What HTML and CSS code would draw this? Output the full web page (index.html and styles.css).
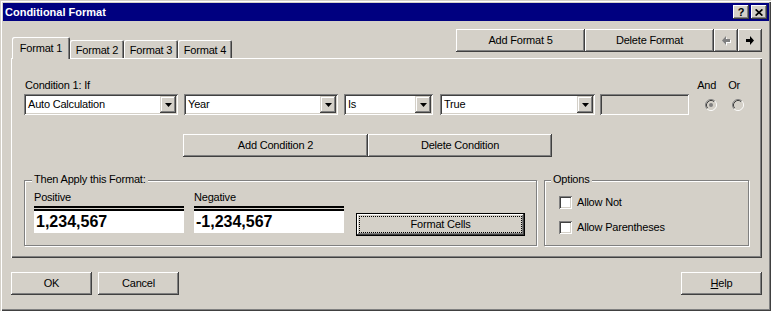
FILE: index.html
```html
<!DOCTYPE html>
<html>
<head>
<meta charset="utf-8">
<title>Conditional Format</title>
<link rel="stylesheet" href="styles.css">
</head>
<body>
<div class="window">
  <div class="titlebar">
    <span class="title">Conditional Format</span>
    <div class="tbtns">
      <span class="tbtn q">?</span>
      <span class="tbtn"><svg width="8" height="7" viewBox="0 0 8 7"><path d="M0.6 0.4 L7.4 6.6 M7.4 0.4 L0.6 6.6" stroke="#000" stroke-width="1.7" fill="none"/></svg></span>
    </div>
  </div>
  <div class="body">
    <div class="tabrow">
      <div class="tabs">
        <div class="tab sel">Format 1</div>
        <div class="tab">Format 2</div>
        <div class="tab">Format 3</div>
        <div class="tab">Format 4</div>
      </div>
      <div class="topbtns">
        <div class="btn wide">Add Format 5</div>
        <div class="btn wide">Delete Format</div>
        <div class="btn arrow"><svg width="9" height="10" viewBox="0 0 9 10"><polygon points="9,4 5,4 5,1 1,5.5 5,10 5,7 9,7" fill="#fff"/><polygon points="8,3 4,3 4,0 0,4.5 4,9 4,6 8,6" fill="#808080"/></svg></div>
        <div class="btn arrow"><svg width="9" height="10" viewBox="0 0 9 10"><polygon points="0,3 4,3 4,0 8,4.5 4,9 4,6 0,6" fill="#000"/></svg></div>
      </div>
    </div>
    <div class="panel">
      <div class="labelrow">
        <span class="cond">Condition 1: If</span>
        <span class="and">And</span>
        <span class="or">Or</span>
      </div>
      <div class="ctrlrow">
        <div class="combo c1"><span class="ctext">Auto Calculation</span><span class="cbtn"><svg width="7" height="4" viewBox="0 0 7 4"><polygon points="0,0 7,0 3.5,4" fill="#000"/></svg></span></div>
        <div class="combo c2"><span class="ctext">Year</span><span class="cbtn"><svg width="7" height="4" viewBox="0 0 7 4"><polygon points="0,0 7,0 3.5,4" fill="#000"/></svg></span></div>
        <div class="combo c3"><span class="ctext">Is</span><span class="cbtn"><svg width="7" height="4" viewBox="0 0 7 4"><polygon points="0,0 7,0 3.5,4" fill="#000"/></svg></span></div>
        <div class="combo c4"><span class="ctext">True</span><span class="cbtn"><svg width="7" height="4" viewBox="0 0 7 4"><polygon points="0,0 7,0 3.5,4" fill="#000"/></svg></span></div>
        <div class="combo c5 disabled"></div>
        <svg class="radio r1" width="12" height="12" viewBox="0 0 12 12">
          <circle cx="6" cy="6" r="5" fill="#D4D0C8"/>
          <path d="M2.11 9.89 A5.5 5.5 0 0 1 9.89 2.11" stroke="#808080" fill="none"/>
          <path d="M2.82 9.18 A4.5 4.5 0 0 1 9.18 2.82" stroke="#404040" fill="none"/>
          <path d="M9.89 2.11 A5.5 5.5 0 0 1 2.11 9.89" stroke="#fff" fill="none"/>
          <path d="M9.18 2.82 A4.5 4.5 0 0 1 2.82 9.18" stroke="#D4D0C8" fill="none"/>
          <circle cx="6" cy="6" r="2" fill="#808080"/>
        </svg>
        <svg class="radio r2" width="12" height="12" viewBox="0 0 12 12">
          <circle cx="6" cy="6" r="5" fill="#D4D0C8"/>
          <path d="M2.11 9.89 A5.5 5.5 0 0 1 9.89 2.11" stroke="#808080" fill="none"/>
          <path d="M2.82 9.18 A4.5 4.5 0 0 1 9.18 2.82" stroke="#404040" fill="none"/>
          <path d="M9.89 2.11 A5.5 5.5 0 0 1 2.11 9.89" stroke="#fff" fill="none"/>
          <path d="M9.18 2.82 A4.5 4.5 0 0 1 2.82 9.18" stroke="#D4D0C8" fill="none"/>
        </svg>
      </div>
      <div class="condbtns">
        <div class="btn cb1">Add Condition 2</div>
        <div class="btn cb2">Delete Condition</div>
      </div>
      <div class="groups">
        <div class="group g1">
          <span class="legend l1">Then Apply this Format:</span>
          <div class="fmtrow">
            <div class="col">
              <div class="lbl">Positive</div>
              <div class="preview">1,234,567</div>
            </div>
            <div class="col col2">
              <div class="lbl">Negative</div>
              <div class="preview">-1,234,567</div>
            </div>
            <div class="btn default"><span class="focus">Format Cells</span></div>
          </div>
        </div>
        <div class="group g2">
          <span class="legend l2">Options</span>
          <div class="chk first"><span class="box"></span>Allow Not</div>
          <div class="chk second"><span class="box"></span>Allow Parentheses</div>
        </div>
      </div>
    </div>
    <div class="footer">
      <div class="btn fb">OK</div>
      <div class="btn fb cancel">Cancel</div>
      <div class="btn fb help"><u>H</u>elp</div>
    </div>
  </div>
</div>
</body>
</html>
```
FILE: styles.css
```css
* { box-sizing: border-box; }
html, body { margin: 0; padding: 0; background: #D4D0C8; }
body {
  font-family: "Liberation Sans", Arial, sans-serif;
  font-size: 11px;
  line-height: 13px;
  letter-spacing: -0.2px;
  color: #000;
}
.window {
  width: 771px;
  height: 311px;
  background: #D4D0C8;
  padding: 3px 2px 0 3px;
  box-shadow: inset 1px 1px #D4D0C8, inset 2px 2px #fff, inset -1px -1px #404040, inset -2px -2px #808080;
}
.titlebar {
  height: 18px;
  background: #000080;
  color: #fff;
  display: flex;
  align-items: center;
  padding-left: 2px;
}
.title { font-weight: bold; font-size: 11px; letter-spacing: 0; }
.tbtns { margin-left: auto; margin-right: 2px; display: flex; gap: 2px; }
.tbtn {
  width: 16px;
  height: 14px;
  background: #D4D0C8;
  color: #000;
  display: flex;
  align-items: center;
  justify-content: center;
  font-weight: bold;
  font-size: 11px;
  box-shadow: inset -1px -1px #404040, inset 1px 1px #fff, inset -2px -2px #808080, inset 2px 2px #D4D0C8;
}
.btn {
  background: #D4D0C8;
  height: 23px;
  display: flex;
  align-items: center;
  justify-content: center;
  box-shadow: inset -1px -1px #404040, inset 1px 1px #fff, inset -2px -2px #808080, inset 2px 2px #D4D0C8;
  white-space: nowrap;
}
.body { margin: 0 7px 0 8px; }
.tabrow { height: 37px; display: flex; justify-content: space-between; }
.tabs { display: flex; align-items: flex-end; padding-left: 1px; }
.tab {
  width: 54px;
  height: 18px;
  padding-top: 4px;
  text-align: center;
  background: #D4D0C8;
  border-radius: 2px 2px 0 0;
  box-shadow: inset 1px 1px #fff, inset -1px 0 #404040, inset -2px 0 #808080;
}
.tab.sel {
  width: 58px;
  height: 22px;
  padding-top: 5px;
  margin-bottom: -1px;
  position: relative;
  z-index: 1;
}
.topbtns { display: flex; margin-top: 8px; height: 23px; }
.wide { width: 129px; }
.arrow { width: 24px; }
.panel {
  display: flow-root;
  height: 200px;
  box-shadow: inset 1px 1px #fff, inset -1px -1px #404040, inset -2px -2px #808080;
}
.labelrow {
  display: flex;
  margin-top: 21px;
  padding-left: 14px;
  padding-right: 22px;
  height: 13px;
}
.cond { flex: 1; }
.or { margin-left: 12px; }
.ctrlrow {
  display: flex;
  align-items: center;
  margin-top: 2px;
  padding-left: 13px;
  height: 21px;
}
.combo {
  height: 21px;
  background: #fff;
  display: flex;
  align-items: center;
  padding: 2px;
  box-shadow: inset 1px 1px #808080, inset -1px -1px #fff, inset 2px 2px #404040, inset -2px -2px #D4D0C8;
}
.combo.disabled { background: #D4D0C8; }
.ctext { padding-left: 2px; flex: 1; }
.cbtn {
  width: 16px;
  height: 17px;
  display: flex;
  align-items: center;
  justify-content: center;
  background: #D4D0C8;
  box-shadow: inset -1px -1px #404040, inset 1px 1px #D4D0C8, inset -2px -2px #808080, inset 2px 2px #fff;
}
.c1 { width: 154px; }
.c2 { width: 154px; margin-left: 6px; }
.c3 { width: 89px; margin-left: 6px; }
.c4 { width: 155px; margin-left: 7px; }
.c5 { width: 89px; margin-left: 5px; }
.radio { display: block; }
.r1 { margin-left: 16px; }
.r2 { margin-left: 15px; }
.condbtns { display: flex; margin-top: 19px; padding-left: 172px; }
.cb1 { width: 185px; }
.cb2 { width: 184px; }
.groups { display: flex; margin-top: 23px; padding-left: 13px; gap: 7px; }
.group {
  height: 66px;
  border: 1px solid #808080;
  box-shadow: inset 1px 1px #fff, 1px 1px #fff;
}
.g1 { width: 513px; }
.g2 { width: 205px; }
.legend {
  display: block;
  width: max-content;
  margin-top: -8px;
  padding: 0 2px;
  background: #D4D0C8;
  height: 13px;
}
.l1 { margin-left: 7px; }
.l2 { margin-left: 6px; }
.fmtrow { display: flex; margin-top: 5px; padding-left: 9px; }
.col { width: 150px; }
.col2 { margin-left: 10px; }
.lbl { height: 13px; margin-bottom: 2px; }
.preview {
  height: 27px;
  border-top: 5px double #000;
  background: #fff;
  background-clip: padding-box;
  font-weight: bold;
  font-size: 16px;
  line-height: 22px;
  letter-spacing: 0;
  padding-left: 2px;
}
.default {
  width: 169px;
  margin-left: 12px;
  margin-top: 22px;
  border: 1px solid #000;
  padding: 2px;
}
.focus {
  width: 100%;
  height: 100%;
  border: 1px dotted #000;
  display: flex;
  align-items: center;
  justify-content: center;
}
.chk { display: flex; align-items: center; height: 13px; margin-left: 14px; }
.chk.first { margin-top: 10px; }
.chk.second { margin-top: 12px; }
.box {
  width: 13px;
  height: 13px;
  background: #fff;
  margin-right: 5px;
  box-shadow: inset 1px 1px #808080, inset -1px -1px #fff, inset 2px 2px #404040, inset -2px -2px #D4D0C8;
}
.footer { display: flex; margin-top: 14px; }
.fb { width: 81px; }
.cancel { margin-left: 6px; }
.help { margin-left: auto; }
.help u { text-decoration: underline; }
```
